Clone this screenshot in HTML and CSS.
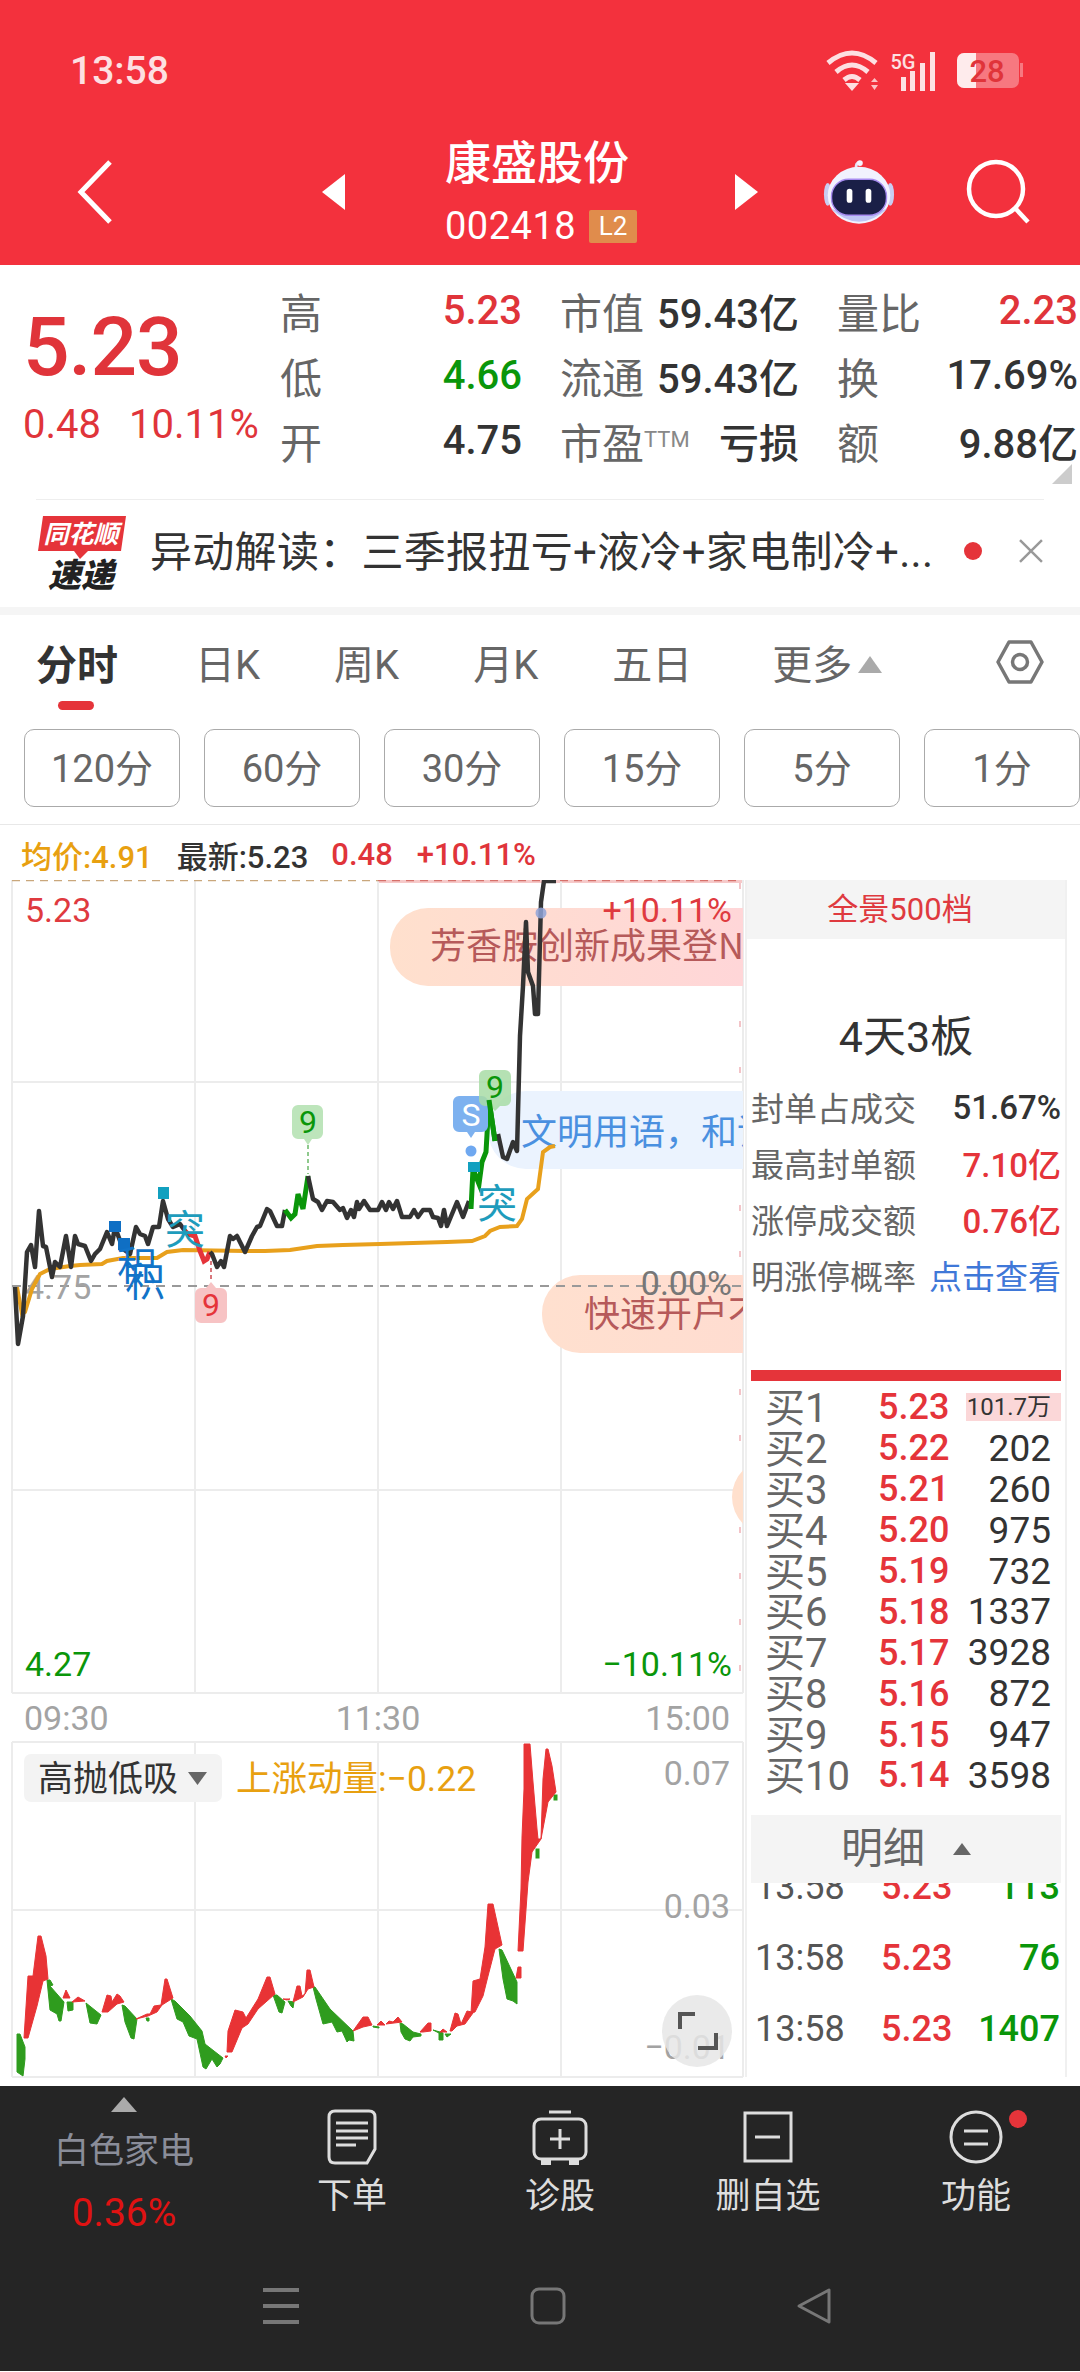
FILE: index.html
```html
<!DOCTYPE html>
<html lang="zh-CN">

<head>
    <meta charset="UTF-8">
    <meta name="viewport" content="width=device-width, initial-scale=1.0">
    <title>康盛股份 002418</title>
    <link rel="stylesheet" href="styles.css">
</head>

<body>

    <!-- Red header: status bar and stock title -->
    <header class="top">
        <div class="status">
            <span class="clock">13:58</span>
            <svg class="status-icons" width="200" height="44" viewBox="0 0 200 44">
                <g fill="none" stroke="#fff" stroke-width="5" opacity="0.85">
                    <path d="M2 14 Q26 -6 50 14" />
                    <path d="M10 23 Q26 9 42 23" />
                    <path d="M18 31 Q26 24 34 31" />
                </g>
                <path d="M19 34 L33 34 L26 42 Z" fill="#fff" opacity="0.85" />
                <path d="M45 33 L52 33 L48.5 29 Z M45 36 L52 36 L48.5 41 Z" fill="#fff" opacity="0.7" />
                <text x="77" y="20" class="fiveg">5G</text>
                <g fill="#fff" opacity="0.85">
                    <rect x="75" y="28" width="5" height="14" />
                    <rect x="84" y="22" width="5" height="20" />
                    <rect x="94" y="14" width="5" height="28" />
                    <rect x="104" y="3" width="5" height="39" />
                </g>
                <g transform="translate(3 0)">
                    <rect x="128" y="4" width="62" height="35" rx="7" fill="#fff" opacity="0.35" />
                    <path d="M135 4 H147 V39 H135 A7 7 0 0 1 128 32 V11 A7 7 0 0 1 135 4 Z" fill="#fff" opacity="0.85" />
                    <rect x="191" y="14" width="3" height="14" fill="#fff" opacity="0.35" />
                    <text x="158" y="33" class="batt">28</text>
                </g>
            </svg>
        </div>
        <div class="titlebar">
            <svg class="back" width="40" height="66" viewBox="0 0 40 66">
                <path d="M35 3 L6 33 L35 63" fill="none" stroke="#fff" stroke-width="5" />
            </svg>
            <div class="arrow arrow-left"></div>
            <div class="stock">
                <div class="stock-name">康盛股份</div>
                <div class="stock-code">002418<span class="badge-l2">L2</span></div>
            </div>
            <div class="arrow arrow-right"></div>
            <svg class="robot" width="72" height="65" viewBox="0 0 76 68">
                <path d="M35 11 Q34 3 39 3" fill="none" stroke="#e6e6f8" stroke-width="3" />
                <circle cx="39" cy="4" r="3" fill="#f4f4ff" />
                <ellipse cx="5" cy="37" rx="4" ry="12" fill="#c9cdf2" />
                <ellipse cx="71" cy="37" rx="4" ry="12" fill="#c9cdf2" />
                <ellipse cx="38" cy="38" rx="33" ry="30" fill="#f1f2fe" />
                <path d="M8 52 Q38 80 68 52 Q38 64 8 52 Z" fill="#bfc5f4" />
                <rect x="9" y="21" width="58" height="38" rx="18" fill="#1a1f47" stroke="#a78cf0" stroke-width="1.5" />
                <rect x="25" y="31" width="6" height="15" rx="3" fill="#fff" />
                <rect x="45" y="31" width="6" height="15" rx="3" fill="#fff" />
            </svg>
            <svg class="search" width="66" height="66" viewBox="0 0 66 66">
                <circle cx="30" cy="30" r="27" fill="none" stroke="#fff" stroke-width="4.5" />
                <path d="M49 49 L62 63" stroke="#fff" stroke-width="4.5" />
            </svg>
        </div>
    </header>

    <!-- Quote summary -->
    <section class="quote">
        <div class="price-box">
            <div class="price">5.23</div>
            <div class="change"><span>0.48</span><span>10.11%</span></div>
        </div>
        <div class="quote-grid">
            <span class="lbl">高</span><span class="val up">5.23</span>
            <span class="lbl">市值</span><span class="val">59.43亿</span>
            <span class="lbl">量比</span><span class="val up">2.23</span>

            <span class="lbl">低</span><span class="val down">4.66</span>
            <span class="lbl">流通</span><span class="val">59.43亿</span>
            <span class="lbl">换</span><span class="val">17.69%</span>

            <span class="lbl">开</span><span class="val">4.75</span>
            <span class="lbl">市盈<sup class="ttm">TTM</sup></span><span class="val">亏损</span>
            <span class="lbl">额</span><span class="val">9.88亿</span>
        </div>
        <div class="corner"></div>
    </section>

    <!-- News ticker -->
    <section class="news">
        <div class="news-inner">
            <svg class="logo" width="92" height="78" viewBox="0 0 92 78">
                <path d="M7 1 H90 L85 36 H52 L44 44 L38 36 H2 Z" fill="#e5343a" />
                <text x="45" y="28" class="logo-top">同花顺</text>
                <text x="45" y="72" class="logo-bot">速递</text>
            </svg>
            <div class="news-text">异动解读：三季报扭亏+液冷+家电制冷+...</div>
            <span class="news-dot"></span>
            <svg class="news-close" width="26" height="26" viewBox="0 0 26 26">
                <path d="M2 2 L24 24 M24 2 L2 24" stroke="#999" stroke-width="2.5" />
            </svg>
        </div>
    </section>

    <!-- Chart type tabs -->
    <nav class="tabs">
        <a class="tab tab-active">分时</a>
        <a class="tab">日K</a>
        <a class="tab">周K</a>
        <a class="tab">月K</a>
        <a class="tab">五日</a>
        <a class="tab tab-more">更多<i class="caret-up"></i></a>
        <svg class="hex" width="48" height="44" viewBox="0 0 48 44">
            <path d="M13 2 H35 L46 22 L35 42 H13 L2 22 Z" fill="none" stroke="#777" stroke-width="3.5" stroke-linejoin="round" />
            <circle cx="24" cy="22" r="7.5" fill="none" stroke="#777" stroke-width="3.5" />
        </svg>
    </nav>

    <div class="periods">
        <a class="period">120分</a>
        <a class="period">60分</a>
        <a class="period">30分</a>
        <a class="period">15分</a>
        <a class="period">5分</a>
        <a class="period">1分</a>
    </div>

    <div class="legend">
        <span class="avg">均价:4.91</span>
        <span class="latest">最新:5.23</span>
        <span class="up">0.48</span>
        <span class="up">+10.11%</span>
    </div>

    <main class="board">
        <!-- viewBox uses the y of the screen so the traced points stay readable -->
        <svg class="charts" width="745" height="1206" viewBox="0 881 745 1206">
            <defs>
                <clipPath id="main-clip"><rect x="12" y="878" width="731" height="816" /></clipPath>
                <linearGradient id="pill-hot" x1="0" x2="1" y1="0" y2="0">
                    <stop offset="0" stop-color="#ffe0cd" />
                    <stop offset="1" stop-color="#ffd4da" />
                </linearGradient>
                <linearGradient id="pill-warm" x1="0" x2="1" y1="0" y2="0">
                    <stop offset="0" stop-color="#ffe0cf" />
                    <stop offset="1" stop-color="#ffd9d2" />
                </linearGradient>
            </defs>

            <!-- price grid -->
            <rect x="378" y="878" width="365" height="6" fill="#f6c9c9" />
            <g class="grid">
                <path d="M12 881 V1694 M195 881 V1694 M378 881 V1694 M561 881 V1694 M743 881 V1694" />
                <path d="M12 1083 H743 M12 1491 H743 M12 1694 H743" />
                <path d="M12 1743 H743 M12 1911 H743 M12 2078 H743" />
                <path d="M12 1743 V2078 M195 1743 V2078 M378 1743 V2078 M561 1743 V2078 M743 1743 V2078" />
            </g>
            <path class="limit-left" d="M12 881 H378" />
            <path class="limit-right" d="M378 881 H740" />
            <path class="limit-v" d="M740 884 V1690" />

            <!-- advert pills -->
            <g clip-path="url(#main-clip)">
                <rect x="390" y="909" width="420" height="78" rx="38" fill="url(#pill-hot)" />
                <text x="430" y="960" class="pill-text">芳香胺创新成果登N</text>
                <rect x="488" y="1092" width="420" height="78" rx="38" fill="#ebf3fe" />
                <text x="521" y="1146" class="pill-blue">文明用语，和谐</text>
                <rect x="542" y="1276" width="420" height="78" rx="38" fill="url(#pill-warm)" />
                <text x="584" y="1328" class="pill-text">快速开户不</text>
                <circle cx="770" cy="1498" r="38" fill="#ffe0cd" />
            </g>
            <path class="zero" d="M12 1287 H743" />

            <!-- axis labels -->
            <text x="25" y="923" class="axis up-fill">5.23</text>
            <text x="732" y="923" class="axis end up-fill">+10.11%</text>
            <text x="25" y="1300" class="axis grey-fill">4.75</text>
            <text x="732" y="1296" class="axis end dim-fill">0.00%</text>
            <text x="25" y="1677" class="axis down-fill">4.27</text>
            <text x="732" y="1677" class="axis end down-fill">−10.11%</text>
            <text x="24" y="1731" class="axis grey-fill">09:30</text>
            <text x="378" y="1731" class="axis mid grey-fill">11:30</text>
            <text x="730" y="1731" class="axis end grey-fill">15:00</text>

            <!-- average and price -->
            <polyline class="line-avg" points="17,1288 22,1315 25,1313 32,1290 40,1275 50,1270 70,1267 80,1266 102,1265 107,1262 123,1259 157,1259 167,1253 183,1251 245,1252 265,1252 290,1251 317,1247 343,1246 380,1245 413,1244 447,1243 472,1242 485,1237 490,1232 500,1228 517,1227 522,1220 527,1200 538,1190 543,1153 550,1148 555,1147" />
            <polyline class="line-price" points="15,1288 18,1345 23,1317 27,1253 31,1246 35,1268 39,1212 43,1247 46,1248 52,1278 55,1263 60,1268 66,1237 71,1268 75,1237 78,1245 85,1247 91,1262 95,1255 100,1250 107,1233 112,1245 115,1228 123,1250 130,1255 136,1228 140,1235 145,1237 148,1245 153,1228 159,1228 163,1202 168,1220 173,1228 180,1225 185,1232" />
            <polyline class="line-red" points="185,1232 188,1235 195,1237 200,1252 204,1262 207,1260 210,1253" />
            <polyline class="line-price" points="210,1253 212,1255 217,1268 221,1262 224,1268 230,1237 233,1240 237,1237 245,1253 252,1237 257,1228 260,1227 267,1210 270,1212 277,1227 282,1227 285,1211" />
            <polyline class="line-green" points="285,1211 291,1219 295,1215 298,1195 303,1210 308,1177" />
            <polyline class="line-price" points="308,1177 313,1200 318,1203 322,1211 327,1202 333,1203 340,1211 343,1209 347,1219 351,1211 354,1218 357,1203 359,1210 364,1202 370,1211 378,1211 382,1203 386,1211 389,1203 393,1210 397,1202 402,1218 410,1218 414,1211 418,1218 423,1211 430,1211 433,1218 438,1219 441,1227 444,1211 447,1227 457,1203 463,1218 469,1202" />
            <polyline class="line-green" points="471,1210 473,1170 479,1185 482,1163 486,1153 489,1101 495,1142" />
            <polyline class="line-price" points="498,1135 503,1158 507,1160 513,1143 517,1152 520,1037 523,987 526,923 528,973 533,987 535,1015 538,1015 541,903 544,882 556,882" />
            <circle cx="541" cy="914" r="5.5" fill="#8fa3d8" opacity="0.85" />

            <!-- signal marks -->
            <rect class="mark-blue" x="109" y="1222" width="12" height="11" />
            <rect class="mark-blue" x="118" y="1239" width="12" height="12" />
            <rect class="mark-teal" x="158" y="1188" width="11" height="12" />
            <rect class="mark-teal" x="468" y="1163" width="12" height="10" />
            <text x="137" y="1281" class="sig sig-blue">积</text>
            <text x="145" y="1297" class="sig sig-blue">积</text>
            <text x="185" y="1245" class="sig sig-teal">突</text>
            <text x="497" y="1219" class="sig sig-teal">突</text>

            <path d="M308 1146 V1175" class="tick-green" />
            <path d="M292 1112 a6 6 0 0 1 6 -6 h19 a6 6 0 0 1 6 6 v22 a6 6 0 0 1 -6 6 h-5 l-4 6 l-4 -6 h-6 a6 6 0 0 1 -6 -6 z" fill="#bde5bb" />
            <text x="308" y="1134" class="nine down-fill">9</text>

            <path d="M211 1262 V1283" class="tick-red" />
            <path d="M195 1295 a6 6 0 0 1 6 -6 h5 l5 -6 l5 6 h5 a6 6 0 0 1 6 6 v23 a6 6 0 0 1 -6 6 h-20 a6 6 0 0 1 -6 -6 z" fill="#f7c3c4" />
            <text x="211" y="1317" class="nine red-fill">9</text>

            <path d="M453 1103 a6 6 0 0 1 6 -6 h23 a6 6 0 0 1 6 6 v24 a6 6 0 0 1 -6 6 h-7 l-4 6 l-4 -6 h-8 a6 6 0 0 1 -6 -6 z" fill="#7db1ef" />
            <text x="471" y="1127" class="nine s-fill">S</text>
            <circle cx="471" cy="1152" r="5.5" fill="#6fa8f0" />
            <path d="M479 1077 a6 6 0 0 1 6 -6 h20 a6 6 0 0 1 6 6 v24 a6 6 0 0 1 -6 6 h-5 l-5 5 l-5 -5 h-5 a6 6 0 0 1 -6 -6 z" fill="#a8dca6" opacity="0.85" />
            <text x="495" y="1099" class="nine down-fill">9</text>
            <polyline class="line-green" points="489,1101 495,1142" />

            <!-- indicator pane -->
            <rect x="24" y="1755" width="198" height="48" rx="7" fill="#f3f3f3" />
            <text x="38" y="1792" class="ind-name">高抛低吸</text>
            <path d="M188 1773 H207 L197.5 1786 Z" fill="#666" />
            <text x="236" y="1792" class="ind-val">上涨动量:−0.22</text>
            <text x="730" y="1786" class="axis end grey-fill">0.07</text>
            <text x="730" y="1919" class="axis end grey-fill">0.03</text>
            <text x="730" y="2060" class="axis end grey-fill">−0.01</text>

            <g class="bar-green">
                <polygon points="17,2035 20,2035 25,2048 25,2060 23,2077 17,2073" />
                <polygon points="47,1981 50,1981 53,1986 50,1987 64,2003 61,2022 59,2022 57,2015 50,2011" />
                <polygon points="67,2003 73,2003 73,2011 68,2012" />
                <polygon points="86,2004 101,2016 97,2025 90,2024" />
                <polygon points="122,2006 125,2007 137,2020 134,2040 131,2039 125,2023" />
                <polygon points="146,2019 149,2019 149,2022 147,2022" />
                <polygon points="171,2000 175,2002 190,2017 202,2032 205,2045 223,2059 220,2065 217,2068 212,2060 206,2070 203,2068 197,2040 189,2037 183,2023 177,2020" />
                <polygon points="273,1996 277,1996 285,2003 282,2014 279,2013" />
                <polygon points="288,2002 294,2003 293,2009 291,2007" />
                <polygon points="313,1988 315,1988 330,2010 353,2032 354,2042 349,2041 347,2043 342,2032 337,2033 332,2023 323,2025 316,2000" />
                <polygon points="373,2027 379,2028 379,2029 373,2028" />
                <polygon points="400,2024 403,2025 413,2033 421,2035 421,2037 413,2038 410,2042 405,2040 401,2033" />
                <polygon points="433,2031 440,2033 443,2034 443,2041 439,2041 439,2034" />
                <polygon points="445,2035 451,2035 447,2038" />
                <polygon points="499,1950 502,1951 517,1983 517,2005 513,2002 507,2000 503,1980" />
                <rect x="536" y="1850" width="3" height="9" />
                <rect x="554" y="1796" width="3" height="5" />
            </g>
            <g class="bar-red">
                <polygon points="24,2039 28,1977 33,1977 38,1937 41,1937 46,1957 48,1980 43,1982 37,2007 28,2039" />
                <polygon points="63,1999 66,1991 70,1999" />
                <polygon points="72,2003 78,1998 85,2002" />
                <polygon points="102,2013 107,1996 111,1997 112,2003 117,1995 120,1997 124,2003 117,2005 108,2013" />
                <polygon points="136,2020 147,2015 150,2015 154,2007 161,2006 165,1980 167,1980 173,1999 162,2006 157,2013 148,2017" />
                <polygon points="225,2057 228,2057 226,2059" />
                <polygon points="227,2053 228,2032 235,2011 243,2013 246,2019 258,2000 267,1978 270,1978 275,1995 258,2010 248,2025 242,2029 232,2053" />
                <polygon points="283,2000 290,2000 287,2001" />
                <polygon points="293,2003 297,1987 300,1987 302,1997 305,1995 307,1971 310,1971 314,1988 308,1990 303,1998 297,2001" />
                <polygon points="353,2032 363,2018 368,2018 372,2026 363,2028" />
                <polygon points="377,2026 381,2022 385,2026" />
                <polygon points="386,2025 389,2022 393,2023 398,2018 402,2023" />
                <polygon points="420,2033 428,2024 431,2024 431,2032 423,2033" />
                <polygon points="440,2033 443,2030 447,2033" />
                <polygon points="450,2032 455,2014 458,2015 461,2025 467,2012 472,2013 473,2014 465,2025 457,2027 452,2032" />
                <polygon points="471,2014 473,1982 480,1980 485,1948 488,1905 493,1905 502,1946 495,1950 488,1977 483,1997 475,2013" />
                <polygon points="516,1979 518,1968 521,1968 521,1979" />
                <polygon points="518,1952 521,1890 522,1838 524,1790 524,1745 530,1745 533,1783 537,1830 538,1840 541,1840 543,1780 546,1750 548,1750 552,1767 556,1793 548,1803 541,1840 532,1853 528,1883 523,1952" />
            </g>

            <!-- fullscreen button -->
            <ellipse cx="697" cy="2032" rx="35" ry="36" fill="#e6e6e6" opacity="0.85" />
            <path d="M680 2030 V2015 H695 M716 2034 V2049 H698" fill="none" stroke="#555" stroke-width="4" />
        </svg>

        <aside class="side">
            <div class="side-head">全景500档</div>
            <div class="limit-box">
                <div class="limit-title">4天3板</div>
                <div class="limit-row"><span>封单占成交</span><b>51.67%</b></div>
                <div class="limit-row"><span>最高封单额</span><b class="up">7.10亿</b></div>
                <div class="limit-row"><span>涨停成交额</span><b class="up">0.76亿</b></div>
                <div class="limit-row"><span>明涨停概率</span><b class="link">点击查看</b></div>
            </div>
            <div class="redbar"></div>
            <ul class="bids">
                <li><span class="b-name">买1</span><span class="b-price">5.23</span><span class="b-qty b-top">101.7万</span></li>
                <li><span class="b-name">买2</span><span class="b-price">5.22</span><span class="b-qty">202</span></li>
                <li><span class="b-name">买3</span><span class="b-price">5.21</span><span class="b-qty">260</span></li>
                <li><span class="b-name">买4</span><span class="b-price">5.20</span><span class="b-qty">975</span></li>
                <li><span class="b-name">买5</span><span class="b-price">5.19</span><span class="b-qty">732</span></li>
                <li><span class="b-name">买6</span><span class="b-price">5.18</span><span class="b-qty">1337</span></li>
                <li><span class="b-name">买7</span><span class="b-price">5.17</span><span class="b-qty">3928</span></li>
                <li><span class="b-name">买8</span><span class="b-price">5.16</span><span class="b-qty">872</span></li>
                <li><span class="b-name">买9</span><span class="b-price">5.15</span><span class="b-qty">947</span></li>
                <li><span class="b-name">买10</span><span class="b-price">5.14</span><span class="b-qty">3598</span></li>
            </ul>
            <div class="detail-head">明细<i class="caret-up caret-dark"></i></div>
            <ul class="ticks">
                <li><span class="t-time">13:58</span><span class="t-price">5.23</span><span class="t-qty">113</span></li>
                <li><span class="t-time">13:58</span><span class="t-price">5.23</span><span class="t-qty">76</span></li>
                <li><span class="t-time">13:58</span><span class="t-price">5.23</span><span class="t-qty">1407</span></li>
            </ul>
        </aside>
    </main>

    <!-- Dark action bar and system navigation -->
    <footer class="bottom">
        <div class="actions">
            <div class="action sector">
                <i class="sector-arrow"></i>
                <div class="sector-name">白色家电</div>
                <div class="sector-pct">0.36%</div>
            </div>
            <div class="action">
                <svg width="50" height="56" viewBox="0 0 50 56">
                    <path d="M8 2 H42 Q48 2 48 8 V40 L40 54 H8 Q2 54 2 48 V8 Q2 2 8 2 Z" fill="none" stroke="#ddd" stroke-width="3" />
                    <path d="M9 14 H41 M9 22 H41 M9 29 H41 M9 36 H29" stroke="#ddd" stroke-width="3" />
                </svg>
                <span>下单</span>
            </div>
            <div class="action">
                <svg width="58" height="56" viewBox="0 0 58 56">
                    <path d="M18 3 H40" stroke="#ddd" stroke-width="3" />
                    <rect x="3" y="10" width="52" height="40" rx="7" fill="none" stroke="#ddd" stroke-width="3" />
                    <path d="M11 50 V55 H19 V50 M39 50 V55 H47 V50" fill="#ddd" stroke="#ddd" stroke-width="2" />
                    <path d="M19 30 H39 M29 20 V40" stroke="#ddd" stroke-width="3" />
                </svg>
                <span>诊股</span>
            </div>
            <div class="action">
                <svg width="50" height="56" viewBox="0 0 50 56">
                    <rect x="2" y="4" width="46" height="48" fill="none" stroke="#ddd" stroke-width="3" />
                    <path d="M12 28 H37" stroke="#ddd" stroke-width="3" />
                </svg>
                <span>删自选</span>
            </div>
            <div class="action">
                <svg width="54" height="56" viewBox="0 0 54 56">
                    <circle cx="27" cy="28" r="25" fill="none" stroke="#ddd" stroke-width="3" />
                    <path d="M15 22 H39 M15 35 H39" stroke="#ddd" stroke-width="3" />
                </svg>
                <span>功能</span>
                <i class="action-dot"></i>
            </div>
        </div>
        <div class="sysnav">
            <svg width="38" height="38" viewBox="0 0 38 38">
                <path d="M1 3 H37 M1 19 H37 M1 35 H37" stroke="#777" stroke-width="4" />
            </svg>
            <svg width="36" height="38" viewBox="0 0 36 38">
                <rect x="2" y="2" width="32" height="34" rx="7" fill="none" stroke="#777" stroke-width="3" />
            </svg>
            <svg width="36" height="38" viewBox="0 0 36 38">
                <path d="M33 3 V35 L3 19 Z" fill="none" stroke="#777" stroke-width="3" stroke-linejoin="round" />
            </svg>
        </div>
    </footer>

</body>

</html>
```

FILE: styles.css
```css
* {
    box-sizing: border-box;
}

body {
    margin: 0;
    width: 1080px;
    height: 2372px;
    overflow: hidden;
    background: #fff;
    color: #333;
    font-family: Roboto, "Noto Sans CJK SC", sans-serif;
}

ul {
    list-style: none;
    margin: 0;
    padding: 0;
}

i {
    font-style: normal;
}

.up {
    color: #e0343a;
}

.down {
    color: #0a960a;
}

/* header */
.top {
    height: 265px;
    background: #f3313d;
    color: #fff;
}

.status {
    display: flex;
    justify-content: space-between;
    align-items: center;
    height: 110px;
    padding: 32px 54px 0 70px;
}

.clock {
    font-size: 39px;
    font-weight: 500;
    opacity: 0.85;
}

.fiveg {
    font: 500 20px Roboto, sans-serif;
    fill: #fff;
    text-anchor: middle;
    opacity: 0.85;
}

.batt {
    font: 500 31px Roboto, sans-serif;
    fill: #e0343a;
    text-anchor: middle;
}

.titlebar {
    display: flex;
    align-items: center;
    height: 155px;
    padding: 8px 0 0 75px;
}

.arrow {
    width: 0;
    height: 0;
    border-top: 18px solid transparent;
    border-bottom: 18px solid transparent;
}

.arrow-left {
    margin-left: 207px;
    border-right: 23px solid #fff;
}

.arrow-right {
    border-left: 23px solid #fff;
}

.stock {
    width: 390px;
    padding-left: 100px;
}

.stock-name {
    font-size: 46px;
    font-weight: 500;
    line-height: 60px;
}

.stock-code {
    display: flex;
    align-items: center;
    font-size: 38px;
    line-height: 48px;
    letter-spacing: 0.5px;
    margin-top: 9px;
}

.badge-l2 {
    margin-left: 13px;
    width: 48px;
    height: 33px;
    background: #e08c4c;
    border-radius: 2px;
    font-size: 26px;
    line-height: 33px;
    letter-spacing: 0;
    text-align: center;
}

.robot {
    margin-left: 65px;
}

.search {
    margin-left: 71px;
}

/* quote */
.quote {
    position: relative;
    display: flex;
    height: 234px;
    padding: 13px 0 0 23px;
}

.price-box {
    width: 257px;
    color: #e0343a;
    padding-top: 15px;
}

.price {
    font-size: 82px;
    font-weight: 500;
    line-height: 92px;
    margin-top: 8px;
    letter-spacing: -1px;
}

.change {
    display: flex;
    gap: 28px;
    font-size: 40px;
    line-height: 50px;
    margin-top: 7px;
}

.quote-grid {
    display: grid;
    grid-template-columns: 60px 182px 98px 179px 98px 181px;
    grid-auto-rows: 65px;
    align-items: center;
    width: 800px;
}

.lbl {
    font-size: 42px;
    color: #666;
    white-space: nowrap;
}

/* 2nd and 3rd label of a row sit after a gap */
.quote-grid .lbl:nth-child(6n + 3),
.quote-grid .lbl:nth-child(6n + 5) {
    padding-left: 38px;
}

.ttm {
    font-size: 22px;
    vertical-align: 12px;
    line-height: 0;
    color: #888;
}

.val {
    font-size: 40px;
    font-weight: 500;
    text-align: right;
    white-space: nowrap;
}

.corner {
    position: absolute;
    right: 8px;
    bottom: 15px;
    width: 0;
    height: 0;
    border-left: 20px solid transparent;
    border-bottom: 20px solid #ccc;
}

/* news */
.news {
    height: 116px;
    border-bottom: 8px solid #f5f5f5;
    padding: 0 36px;
}

.news-inner {
    display: flex;
    align-items: center;
    height: 108px;
    padding-bottom: 5px;
    border-top: 1px solid #eee;
}

.logo {
    flex: none;
    margin-top: 5px;
}

.logo-top {
    font: italic 700 25px "Noto Sans CJK SC", sans-serif;
    fill: #fff;
    text-anchor: middle;
}

.logo-bot {
    font: italic 900 33px "Noto Sans CJK SC", sans-serif;
    fill: #222;
    text-anchor: middle;
}

.news-text {
    margin: -6px 0 0 22px;
    width: 816px;
    font-size: 42px;
    letter-spacing: 0.3px;
    color: #333;
    white-space: nowrap;
}

.news-dot {
    width: 18px;
    height: 18px;
    border-radius: 50%;
    background: #e5343a;
}

.news-close {
    margin-left: 36px;
}

/* tabs */
.tabs {
    position: relative;
    display: flex;
    align-items: center;
    height: 98px;
    padding: 0 0 4px 36px;
}

.tab {
    font-size: 40px;
    color: #666;
    margin-right: 74px;
    white-space: nowrap;
}

.tab-active {
    position: relative;
    margin-right: 77px;
    font-size: 41px;
    font-weight: 700;
    color: #333;
}

.tab-active::after {
    content: "";
    position: absolute;
    left: 22px;
    bottom: -18px;
    width: 36px;
    height: 9px;
    border-radius: 5px;
    background: #e5343a;
}

.tab-more {
    margin-left: 6px;
    margin-right: 0;
}

.caret-up {
    display: inline-block;
    margin-left: 6px;
    width: 0;
    height: 0;
    border-left: 12px solid transparent;
    border-right: 12px solid transparent;
    border-bottom: 17px solid #aaa;
    vertical-align: 6px;
}

.caret-dark {
    margin-left: 28px;
    border-left-width: 9px;
    border-right-width: 9px;
    border-bottom: 12px solid #666;
    vertical-align: 8px;
}

.hex {
    margin-left: 114px;
}

/* period buttons */
.periods {
    display: flex;
    gap: 24px;
    height: 112px;
    padding: 16px 0 0 24px;
    border-bottom: 1px solid #e8e8e8;
    overflow: hidden;
}

.period {
    flex: none;
    width: 156px;
    height: 78px;
    border: 1px solid #aaa;
    border-radius: 10px;
    font-size: 38px;
    line-height: 78px;
    text-align: center;
    color: #666;
}

/* legend row */
.legend {
    display: flex;
    align-items: center;
    height: 55px;
    padding: 4px 0 0 21px;
    font-size: 31px;
    font-weight: 500;
    white-space: nowrap;
}

.avg {
    color: #e8a010;
    margin-right: 24px;
}

.latest {
    color: #333;
    margin-right: 23px;
}

.legend .up + .up {
    margin-left: 24px;
}

/* chart area */
.board {
    display: flex;
    height: 1206px;
}

.charts {
    flex: none;
    display: block;
}

.grid path {
    fill: none;
    stroke: #ececec;
    stroke-width: 2;
}

.limit-left {
    fill: none;
    stroke: #c9a77c;
    stroke-width: 2.5;
    stroke-dasharray: 8 6;
}

.limit-right {
    fill: none;
    stroke: #d6706a;
    stroke-width: 2.5;
    stroke-dasharray: 8 6;
}

.limit-v {
    fill: none;
    stroke: #f3c4c8;
    stroke-width: 2;
    stroke-dasharray: 6 40;
}

.zero {
    fill: none;
    stroke: #999;
    stroke-width: 2;
    stroke-dasharray: 9 7;
}

.pill-text {
    font: 36px "Noto Sans CJK SC", sans-serif;
    fill: #b65a5a;
}

.pill-blue {
    font: 36px "Noto Sans CJK SC", sans-serif;
    fill: #4a90e0;
}

.axis {
    font: 400 34px Roboto, sans-serif;
}

.end {
    text-anchor: end;
}

.mid {
    text-anchor: middle;
}

.up-fill {
    fill: #df3a3f;
}

.down-fill {
    fill: #0a960a;
}

.red-fill {
    fill: #e5343a;
}

.grey-fill {
    fill: #a3a3a3;
}

.dim-fill {
    fill: #777;
}

.s-fill {
    fill: #fff;
}

.line-avg {
    fill: none;
    stroke: #e8a01c;
    stroke-width: 4;
}

.line-price {
    fill: none;
    stroke: #333;
    stroke-width: 4.5;
    stroke-linejoin: round;
}

.line-red {
    fill: none;
    stroke: #e5343a;
    stroke-width: 5;
}

.line-green {
    fill: none;
    stroke: #0a960a;
    stroke-width: 5;
}

.mark-blue {
    fill: #0f6fc4;
}

.mark-teal {
    fill: #12a0bf;
}

.sig {
    font: 40px "Noto Sans CJK SC", sans-serif;
    text-anchor: middle;
}

.sig-blue {
    fill: #1173c8;
}

.sig-teal {
    fill: #1e9cbc;
}

.nine {
    font: 32px Roboto, sans-serif;
    text-anchor: middle;
}

.tick-green {
    fill: none;
    stroke: #8fc98d;
    stroke-width: 2;
    stroke-dasharray: 4 3;
}

.tick-red {
    fill: none;
    stroke: #d9777c;
    stroke-width: 2;
    stroke-dasharray: 4 3;
}

.ind-name {
    font: 35px "Noto Sans CJK SC", sans-serif;
    fill: #333;
}

.ind-val {
    font: 35.5px Roboto, "Noto Sans CJK SC", sans-serif;
    fill: #e8a010;
}

.bar-green {
    fill: #2f9c1e;
    stroke: #2f9c1e;
    stroke-width: 1;
}

.bar-red {
    fill: #e83335;
    stroke: #e83335;
    stroke-width: 1;
}

/* right panel */
.side {
    width: 322px;
    height: 1197px;
    border-right: 2px solid #f0f0f0;
    border-left: 2px solid #f0f0f0;
    padding: 0 4px;
}

.side-head {
    margin: 0 -4px;
    height: 59px;
    background: #f4f4f4;
    color: #df3a3f;
    font-size: 31px;
    line-height: 59px;
    text-align: center;
    padding-right: 12px;
}

.limit-box {
    height: 431px;
}

.limit-title {
    padding-top: 68px;
    height: 140px;
    font-size: 43px;
    line-height: 60px;
    text-align: center;
    color: #333;
}

.limit-row {
    display: flex;
    justify-content: space-between;
    align-items: center;
    height: 56px;
    font-size: 33px;
    color: #666;
    white-space: nowrap;
}

.limit-row b {
    font-weight: 500;
    color: #333;
}

.limit-row .up {
    color: #e5343a;
}

.limit-row .link {
    color: #3f78d8;
    font-weight: 400;
}

.redbar {
    height: 11px;
    background: #e5343a;
}

.bids {
    padding-top: 6px;
    height: 434px;
}

.bids li {
    display: flex;
    align-items: center;
    height: 40.9px;
    white-space: nowrap;
}

.b-name {
    width: 127px;
    padding-left: 14px;
    margin-top: -5px;
    font-size: 40px;
    color: #666;
}

.b-price {
    width: 76px;
    font-size: 36px;
    font-weight: 500;
    color: #e5343a;
}

.b-qty {
    flex: 1;
    font-size: 37px;
    text-align: right;
    padding-right: 10px;
    color: #333;
}

.bids .b-top {
    margin-left: 12px;
    padding-right: 10px;
    font-size: 24px;
    line-height: 28px;
    background: #fbd7d8;
}

.detail-head {
    height: 68px;
    background: #f4f4f4;
    font-size: 42px;
    line-height: 68px;
    text-align: center;
    color: #666;
}

.ticks {
    height: 195px;
    margin: 0 -2px;
    overflow: hidden;
}

.ticks li {
    display: flex;
    align-items: center;
    height: 71px;
    padding-left: 6px;
    font-size: 36px;
    white-space: nowrap;
}

.ticks li:first-child {
    margin-top: -32px;
}

.t-time {
    width: 126px;
    color: #555;
}

.t-price {
    width: 76px;
    font-weight: 500;
    color: #e5343a;
}

.t-qty {
    flex: 1;
    text-align: right;
    padding-right: 3px;
    font-weight: 500;
    color: #0a960a;
}

/* bottom bar */
.bottom {
    height: 285px;
    background: #252525;
}

.actions {
    display: flex;
    height: 185px;
    padding-left: 20px;
}

.action {
    position: relative;
    display: flex;
    flex-direction: column;
    align-items: center;
    width: 208px;
    padding-top: 23px;
    font-size: 35px;
    color: #ddd;
}

.action span {
    margin-top: 7px;
    line-height: 50px;
}

.sector {
    margin-right: 20px;
    padding-top: 11px;
}

.sector-arrow {
    width: 0;
    height: 0;
    border-left: 13px solid transparent;
    border-right: 13px solid transparent;
    border-bottom: 15px solid #aaa;
}

.sector-name {
    margin-top: 15px;
    line-height: 50px;
    color: #8a8d99;
}

.sector-pct {
    margin-top: 11px;
    line-height: 50px;
    font-size: 39px;
    color: #e01212;
}

.action-dot {
    position: absolute;
    top: 24px;
    left: 137px;
    width: 18px;
    height: 18px;
    border-radius: 50%;
    background: #e5343a;
}

.sysnav {
    display: flex;
    justify-content: space-between;
    width: 570px;
    margin-left: 262px;
    padding-top: 16px;
}
```
